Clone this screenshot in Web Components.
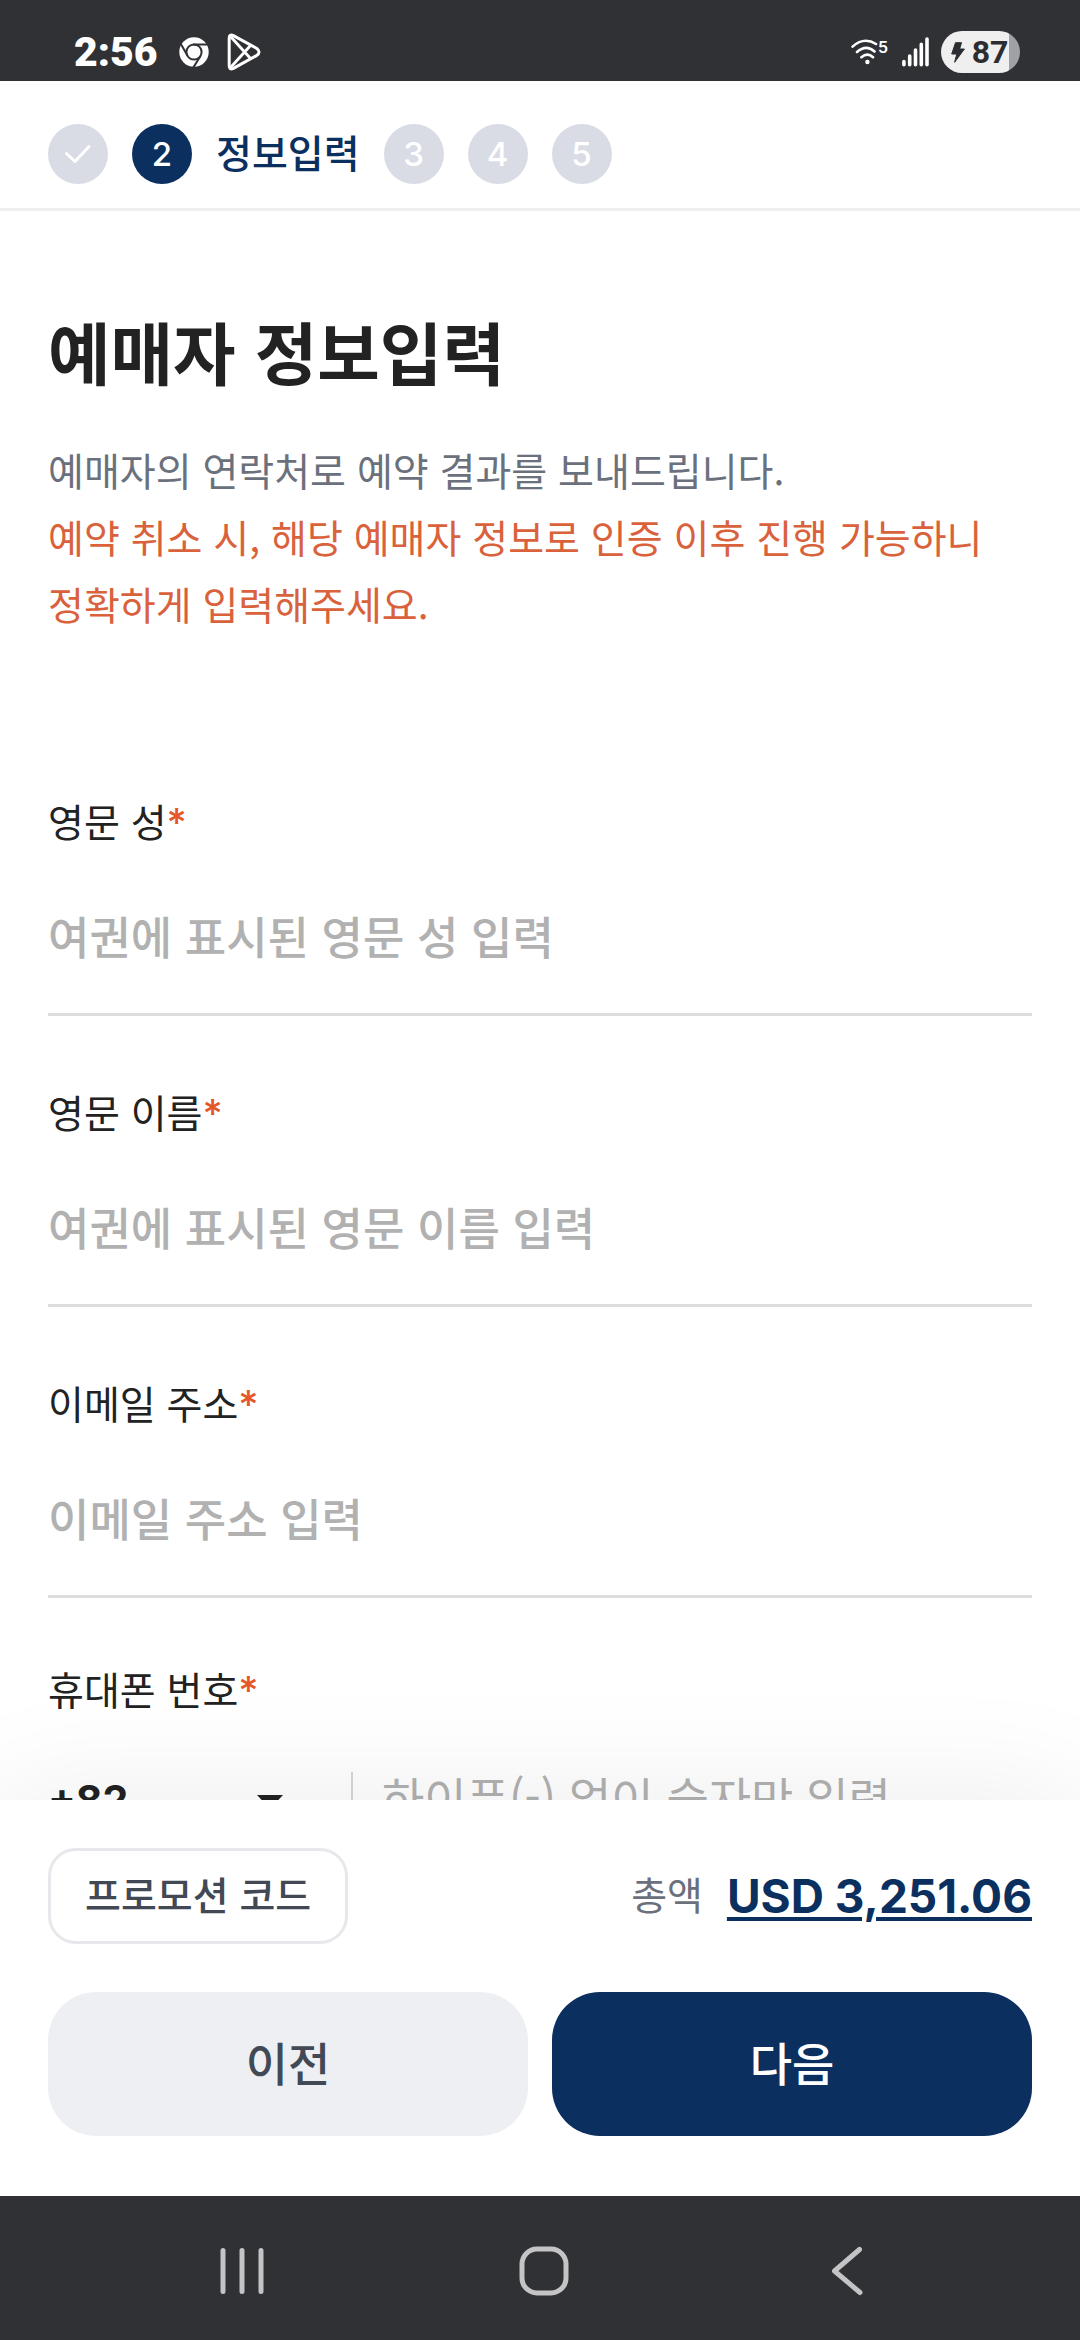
<!DOCTYPE html>
<html lang="ko">
<head>
<meta charset="utf-8">
<meta name="viewport" content="width=device-width, initial-scale=1">
<title>예매자 정보입력</title>
<style>
  :root {
    --navy: #0b3060;
    --ink: #222;
    --muted: #6b717c;
    --slate: #424954;
    --accent: #d9623c;
    --hint: #b1b1b1;
    --rule: #ddd;
    --chrome: #303135;
    --latin: Inter, "Noto Sans CJK KR", sans-serif;
    --gutter: 48px;
  }
  body {
    margin: 0;
    background: #fff;
    color: var(--ink);
    font-family: "Noto Sans CJK KR", Inter, sans-serif;
    font-size: 39px;
    word-break: keep-all;
  }
</style>
</head>
<body>
<app-shell>
  <status-bar slot="top" time="2:56" battery="87"></status-bar>
  <step-bar slot="top">
    <step-item state="done"></step-item>
    <step-item state="current" number="2">정보입력</step-item>
    <step-item number="3"></step-item>
    <step-item number="4"></step-item>
    <step-item number="5"></step-item>
  </step-bar>
  <page-intro>
    <span slot="title">예매자 정보입력</span>
    <span slot="lead">예매자의 연락처로 예약 결과를 보내드립니다.</span>
    <span slot="warning">예약 취소 시, 해당 예매자 정보로 인증 이후 진행 가능하니 정확하게 입력해주세요.</span>
  </page-intro>
  <field-list>
    <text-field label="영문 성" hint="여권에 표시된 영문 성 입력"></text-field>
    <text-field label="영문 이름" hint="여권에 표시된 영문 이름 입력"></text-field>
    <text-field label="이메일 주소" hint="이메일 주소 입력" type="email"></text-field>
  </field-list>
  <phone-field label="휴대폰 번호" hint="하이픈(-) 없이 숫자만 입력"></phone-field>
  <booking-footer slot="bottom" amount="USD 3,251.06"></booking-footer>
  <system-nav slot="bottom"></system-nav>
</app-shell>

<script>
  const define = (name, render) => customElements.define(name, class extends HTMLElement {
    connectedCallback() {
      if (this.shadowRoot) return;
      const root = this.attachShadow({ mode: 'open' });
      root.innerHTML = render(this);
    }
  });
  const attr = (el, name, fallback = '') => el.getAttribute(name) || fallback;

  define('app-shell', () => `
    <style>
      :host { display: flex; flex-direction: column; height: 100vh; }
      main { flex: 1 1 0; min-height: 0; overflow-y: auto; scrollbar-width: none; padding: 0 var(--gutter); }
    </style>
    <slot name="top"></slot>
    <main><slot></slot></main>
    <slot name="bottom"></slot>`);

  define('status-bar', el => `
    <style>
      :host { display: flex; justify-content: space-between; align-items: center; box-sizing: border-box;
        height: 81px; flex: none; padding: 23px 60px 0 74px; background: var(--chrome); color: #fff; }
      .side { display: flex; align-items: center; }
      svg { display: block; }
      .time { font: 900 41px/48px Roboto, sans-serif; margin-right: 21px; }
      .chrome { margin-right: 18px; }
      .wifi { display: flex; align-items: flex-start; margin-right: 14px; }
      .gen { font: 600 16px/18px Inter, sans-serif; }
      .signal { margin-right: 12px; }
      .battery { display: flex; align-items: center; justify-content: center; gap: 7px; box-sizing: border-box;
        width: 79px; height: 42px; padding-right: 2px; border-radius: 21px; color: #2c2d30;
        background: linear-gradient(90deg, #efeff0 68px, #a0a1a4 68px); font: 700 32px/42px Roboto, sans-serif; }
    </style>
    <div class="side">
      <span class="time">${attr(el, 'time')}</span>
      <svg class="chrome" width="30" height="30" viewBox="0 0 30 30">
        <circle cx="15" cy="15" r="14.7" fill="#fff"/>
        <g stroke="#303135" stroke-width="2" fill="none">
          <circle cx="15" cy="15" r="7.6"/>
          <path d="M14 7.5H29"/><path d="M8.7 19 1.3 6"/><path d="M21.5 19 14 31"/>
        </g>
      </svg>
      <svg width="34" height="38" viewBox="0 0 34 38" fill="none" stroke="#fff" stroke-linejoin="round" stroke-linecap="round">
        <path stroke-width="3" d="M2.2 5.2Q2.2 0.6 6.4 2.6L29.5 15.2Q34.6 19 29.5 22.6L6.4 35.4Q2.2 37.4 2.2 32.8Z"/>
        <path stroke-width="2.8" d="M4 4 23.5 25.5M4 34 23.5 12.5"/>
      </svg>
    </div>
    <div class="side">
      <span class="wifi">
        <svg width="27" height="28" viewBox="0 0 27 28" fill="none" stroke="#fff" stroke-width="2.6" stroke-linecap="round">
          <path d="M1.6 8.6Q13 -1.6 25 6M6 14Q15 6 23.5 13.4M10.4 19.2Q16.5 14.2 22 19.2"/>
          <circle cx="16.4" cy="24" r="2.2" fill="#fff" stroke="none"/>
        </svg>
        <span class="gen">5</span>
      </span>
      <svg class="signal" width="27" height="30" viewBox="0 0 27 30" stroke="#fff" stroke-width="3.6" stroke-linecap="round">
        <path d="M1.9 24.5V27.8M7.7 19V27.8M13.5 13V27.8M19.3 7.4V27.8M25 2V27.8"/>
      </svg>
      <span class="battery">
        <svg width="14" height="21" viewBox="0 0 14 21"><path fill="#2c2d30" stroke="#2c2d30" stroke-linejoin="round" d="M4.5.7H10.5L8.6 7H13.4L3.6 20.3 5.8 12H.7Z"/></svg>
        <span>${attr(el, 'battery')}</span>
      </span>
    </div>`);

  define('step-bar', () => `
    <style>
      :host { display: block; flex: none; border-bottom: 3px solid #eceef0; }
      ol { display: flex; align-items: center; gap: 24px; margin: 0; padding: 43px var(--gutter) 24px; }
    </style>
    <ol><slot></slot></ol>`);

  define('step-item', el => {
    const state = attr(el, 'state');
    const mark = state === 'done'
      ? '<svg width="28" height="20" viewBox="0 0 28 20" fill="none" stroke="#fff" stroke-width="3" stroke-linecap="round" stroke-linejoin="round"><path d="M2.5 9.5 11 17.5 25 2.5"/></svg>'
      : attr(el, 'number');
    return `
    <style>
      :host { display: flex; align-items: center; gap: 24px; color: var(--navy); font-weight: 500; line-height: 54px; }
      .dot { display: flex; align-items: center; justify-content: center; width: 60px; height: 60px;
        border-radius: 50%; background: #d9dce5; color: #fff; font: 500 33px/60px var(--latin); }
      .name { padding-bottom: 6px; }
      :host([state="current"]) .dot { background: var(--navy); }
    </style>
    <span class="dot">${mark}</span>${state === 'current' ? '<span class="name"><slot></slot></span>' : ''}`;
  });

  define('page-intro', () => `
    <style>
      :host { display: block; padding-top: 92px; }
      h1 { margin: 0 0 37px; font-size: 68px; line-height: 96px; font-weight: 700; }
      p { margin: 0; line-height: 67px; color: var(--muted); }
      .warning { color: var(--accent); }
    </style>
    <h1><slot name="title"></slot></h1>
    <p><slot name="lead"></slot></p>
    <p class="warning"><slot name="warning"></slot></p>`);

  define('field-list', () => `
    <style>:host { display: flex; flex-direction: column; gap: 64px; margin-top: 152px; }</style>
    <slot></slot>`);

  const fieldStyles = `
      label { display: block; line-height: 62px; margin-bottom: 6px; }
      .req { color: #e4572a; font-family: var(--latin); font-weight: 500; line-height: 1; }
      input { display: block; box-sizing: border-box; width: 100%; margin: 0; padding: 0; border: 0; border-radius: 0;
        background: none; outline: 0; color: var(--ink); font-family: inherit; line-height: 68px; }
      input::placeholder { color: var(--hint); opacity: 1; }`;

  define('text-field', el => `
    <style>
      :host { display: block; }
      ${fieldStyles}
      input { height: 159px; border-bottom: 3px solid var(--rule); font-size: 45px; font-weight: 500; }
    </style>
    <label for="value">${attr(el, 'label')}<span class="req">*</span></label>
    <input id="value" type="${attr(el, 'type', 'text')}" placeholder="${attr(el, 'hint')}">`);

  define('phone-field', el => `
    <style>
      :host { display: block; margin-top: 59px; }
      ${fieldStyles}
      .row { display: flex; align-items: center; height: 142px; border-bottom: 3px solid var(--rule); }
      .code { display: grid; align-items: center; flex: none; width: 303px; padding-top: 8px; }
      .code > * { grid-area: 1 / 1; }
      select { appearance: none; width: 100%; margin: 0; padding: 0; border: 0; background: none;
        color: var(--ink); font: 700 41px/60px var(--latin); }
      svg { justify-self: end; margin: 4px 68px 0 0; pointer-events: none; }
      .divider { flex: none; width: 2px; height: 48px; background: #d6d6d6; }
      .number { flex: 1; padding-left: 29px; }
      input { font-size: 46px; }
    </style>
    <label for="number">${attr(el, 'label')}<span class="req">*</span></label>
    <div class="row">
      <div class="code">
        <select aria-label="국가 번호"><option>+82</option></select>
        <svg width="26" height="14" viewBox="0 0 26 14"><path fill="#222" d="M0 0H26L13 14Z"/></svg>
      </div>
      <span class="divider"></span>
      <div class="number"><input id="number" type="tel" placeholder="${attr(el, 'hint')}"></div>
    </div>`);

  define('booking-footer', el => `
    <style>
      :host { display: flex; flex-direction: column; gap: 48px; flex: none; position: relative; z-index: 1;
        padding: 48px var(--gutter) 60px; background: #fff; box-shadow: 0 0 120px rgba(0, 0, 0, .08); }
      .summary, .total, .actions { display: flex; align-items: center; }
      .summary { justify-content: space-between; }
      .total { gap: 24px; color: var(--muted); line-height: 54px; }
      .total span { padding-bottom: 6px; }
      .actions { gap: 24px; }
      button { margin: 0; padding: 0; border: 0; background: none; font-family: inherit; font-weight: 500; color: var(--slate); }
      .promo { box-sizing: border-box; height: 96px; padding: 0 34px 6px; border: 3px solid #e7e8ec; border-radius: 28px; font-size: 39px; line-height: 60px; }
      .amount { color: var(--navy); font: 700 46px/60px var(--latin); text-decoration: underline; text-decoration-thickness: 4px; text-underline-offset: 4px; }
      .wide { flex: 1; height: 144px; padding-bottom: 6px; border-radius: 48px; background: #edeff3; font-size: 46px; line-height: 68px; }
      .next { background: var(--navy); color: #fff; }
    </style>
    <div class="summary">
      <button class="promo" type="button">프로모션 코드</button>
      <div class="total"><span>총액</span><button class="amount" type="button">${attr(el, 'amount')}</button></div>
    </div>
    <div class="actions">
      <button class="wide" type="button">이전</button>
      <button class="wide next" type="button">다음</button>
    </div>`);

  define('system-nav', () => `
    <style>
      :host { display: flex; flex: none; position: relative; z-index: 2; box-sizing: border-box; height: 144px;
        padding: 6px 82px 0 91px; background: var(--chrome); }
      button { flex: 1; display: flex; align-items: center; justify-content: center; margin: 0; padding: 0; border: 0; background: none; }
      svg { fill: none; stroke: #c4c4c6; stroke-width: 5; stroke-linecap: round; stroke-linejoin: round; }
    </style>
    <button type="button" aria-label="최근 앱"><svg width="48" height="48" viewBox="0 0 48 48"><path d="M5 3.5V44.5M24 3.5V44.5M43 3.5V44.5"/></svg></button>
    <button type="button" aria-label="홈"><svg width="50" height="50" viewBox="0 0 50 50"><rect x="3" y="3" width="44" height="44" rx="15"/></svg></button>
    <button type="button" aria-label="뒤로"><svg width="32" height="50" viewBox="0 0 32 50"><path d="M28.5 3.5 3.5 25 29 46.5"/></svg></button>`);
</script>
</body>
</html>
